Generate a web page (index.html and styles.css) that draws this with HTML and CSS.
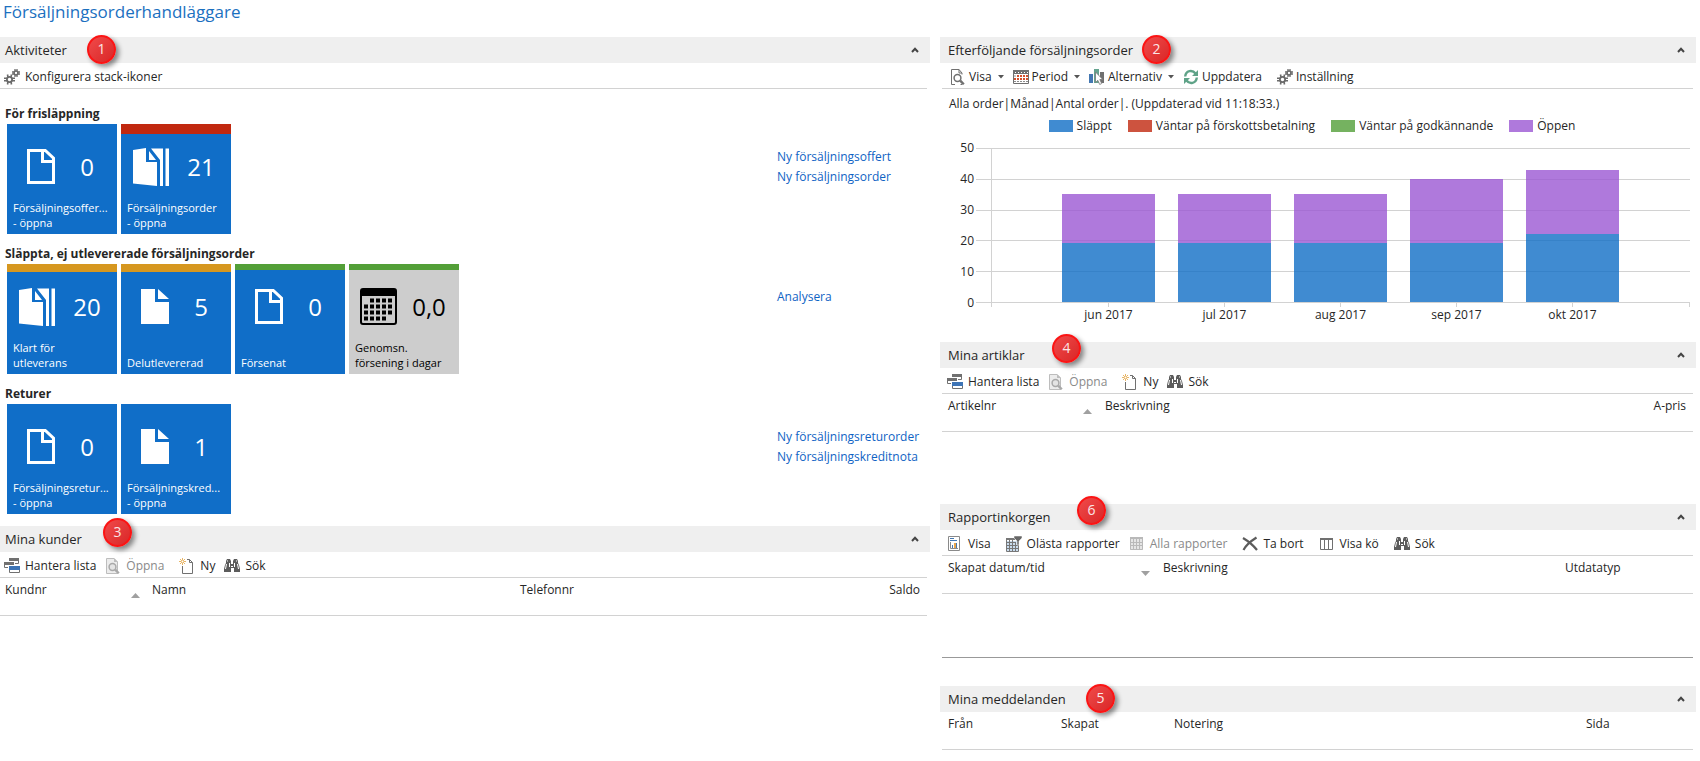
FILE: index.html
```html
<!DOCTYPE html>
<html lang="sv">
<head>
<meta charset="utf-8">
<title>Försäljningsorderhandläggare</title>
<link rel="stylesheet" href="styles.css">
</head>
<body>
<svg class="sprite" aria-hidden="true">
  <symbol id="gears" viewBox="0 0 16 16">
    <g fill="none" stroke="#6b6b6b">
      <circle cx="5.500" cy="10.500" r="2.600" stroke-width="1.800"/>
      <path stroke-width="1.600" d="M4 8.500 3.500 5.500M7 8.500l.5-3M4 12.500l-.5 3M7 12.500l.5 3M3.500 9.200H0M3.500 11.800H0M7.500 9.200H11M7.500 11.800H11"/>
      <circle cx="12" cy="4" r="1.900" stroke-width="1.500"/>
      <path stroke-width="1.300" d="M11 2.500V0M13 2.500V0M11 5.500V8M13 5.500V8M10.500 3H8M10.500 5H8M13.500 3H16M13.500 5H16"/>
    </g>
  </symbol>
  <symbol id="manage" viewBox="0 0 16 16">
    <path fill="#fff" stroke="#707070" d="M5.500.5h9v5h-9z"/><path fill="#707070" d="M5 0h10v3H5z"/>
    <path fill="#fff" d="M0 3h11v7H0z"/><path fill="#fff" stroke="#707070" d="M.5 4.500h9v5h-9z"/><path fill="#707070" d="M0 4h10v3H0z"/>
    <path fill="#fff" d="M4 7h12v9H4z"/><path fill="#fff" stroke="#707070" d="M5.500 8.500h10v6h-10z"/><path fill="#3d74b5" d="M5 8h11v4H5z"/>
  </symbol>
  <symbol id="preview" viewBox="0 0 16 16">
    <path fill="none" stroke="#707070" d="M12 5.500V4L9 .5H1.500v15H5M9 .5V4h3M10.500 15.500h1.500"/>
    <circle cx="7.500" cy="9" r="3.400" fill="#fff" stroke="#707070" stroke-width="1.500"/>
    <path stroke="#707070" stroke-width="2.400" d="m10.200 11.700 3.600 3.600"/>
  </symbol>
  <symbol id="preview-off" viewBox="0 0 16 16">
    <path fill="#ececec" stroke="#bdbdbd" d="M12.500 15.500V4L9 .5H1.500v15z"/><path fill="#bdbdbd" d="M9 0v4h4z"/>
    <circle cx="7.500" cy="9" r="3.400" fill="#e4e4e4" stroke="#a9a9a9" stroke-width="1.500"/>
    <path stroke="#a9a9a9" stroke-width="2.400" d="m10.200 11.700 3.600 3.600"/>
  </symbol>
  <symbol id="new" viewBox="0 0 16 16">
    <path fill="none" stroke="#707070" d="M3.500 8v7.500h10v-11l-3-3H8M10.500 1.500v3h3"/>
    <path stroke="#e8b565" d="M3.500 0v7M0 3.500h7M1 1l5 5M6 1 1 6"/><circle cx="3.500" cy="3.500" r="1" fill="#fff"/>
  </symbol>
  <symbol id="find" viewBox="0 0 16 16">
    <path fill="#5c5c5c" d="M3 1h3l1 2v3h2V3l1-2h3l1 2v2l1 2 1 4v3h-6v-4H7v4H0v-3l1-4 1-2V3z"/>
    <path fill="none" stroke="#fff" d="M3 3h1M12 3h1M2.500 6 1.500 11M13.500 6l1 5M5.500 5v4M10.500 5v4M7 8.500h2"/>
  </symbol>
  <symbol id="period" viewBox="0 0 16 16">
    <path fill="#fff" stroke="#707070" d="M.5 1.500h15v13H.5z"/><path fill="#707070" d="M0 1h16v4H0z"/>
    <path stroke="#fff" stroke-dasharray="1 2" d="M2 3.500h13"/>
    <path stroke="#d4502c" stroke-width="2" stroke-dasharray="2 1" d="M4 7h11M1 10h14"/><path stroke="#8b8b8b" stroke-dasharray="2 1" d="M1 7h2M1 12.500h14"/>
  </symbol>
  <symbol id="option" viewBox="0 0 16 16">
    <path fill="#4478b2" d="M0 5h4v9H0z"/><path fill="#65a48f" d="M5 0h5v14H5z"/><path fill="#707070" d="M11 3h4v11h-4z"/>
    <path fill="#fff" stroke="#777" stroke-width=".8" d="M6.500 3v10.500l2.300-2.200 1.900 4.200 2-1-1.900-4h3z"/>
  </symbol>
  <symbol id="refresh" viewBox="0 0 16 16">
    <g fill="none" stroke="#5fa388" stroke-width="2.400"><path d="M2.200 7.500C2.700 1.300 9.500.5 12.500 4.500M13.800 8.500c-.5 6.200-7.300 7-10.300 3"/></g>
    <path fill="#5fa388" d="M15 1v6H9zM1 15V9h6z"/>
  </symbol>
  <symbol id="report" viewBox="0 0 16 16">
    <path fill="#fff" stroke="#8a8a8a" d="M1.500.5h11v14h-11z"/><path stroke="#4478b2" d="M3 2.500h4M3 4.500h7"/>
    <path fill="none" stroke="#8a8a8a" d="M3.500 6v6.500H11"/><path fill="#4478b2" d="M5 9h1v3H5zM9 7h1v5H9z"/><path fill="#e8a54b" d="M7 7h2v5H7z"/>
  </symbol>
  <symbol id="filter" viewBox="0 0 16 16">
    <path fill="#c9dcee" d="M1 5h11v11H1z"/><path fill="#777" d="M0 2h9v2H0z"/>
    <path fill="none" stroke="#777" d="M.5 3v12.500h12V8M3.500 4v12M6.500 4v12M9.500 6v10M0 6.500h10M0 9.500h12M0 12.500h12"/>
    <path fill="#666" stroke="#fff" stroke-width=".5" d="M8 0h8v2l-3 3v4h-2V5L8 2z"/>
  </symbol>
  <symbol id="grid-off" viewBox="0 0 16 16">
    <path fill="#e5e5e5" d="M1 1h13v13H1z"/><path fill="#b9b9b9" d="M1 1h13v2H1z"/>
    <path fill="none" stroke="#b9b9b9" d="M1.500 2v11.500h12V2M4.500 3v11M7.500 3v11M10.500 3v11M1 6.500h13M1 9.500h13"/>
  </symbol>
  <symbol id="delete" viewBox="0 0 16 16">
    <path fill="none" stroke="#5c5c5c" stroke-width="2.200" d="M1 2c5 3 10 7 14 12M14.500 1.500C9 5 4 9 1.500 14"/>
  </symbol>
  <symbol id="queue" viewBox="0 0 16 16">
    <path fill="#fff" stroke="#707070" d="M1.500 2.500h12v11h-12zM5.500 3v10M9.500 3v10"/><path fill="#707070" d="M1 2h13v2H1z"/>
  </symbol>
  <symbol id="fold" viewBox="0 0 8 6"><path fill="none" stroke="#444" stroke-width="2" d="m1 5 3-3.200L7 5"/></symbol>
  <symbol id="caret" viewBox="0 0 6 4"><path fill="#555" d="M0 0h6L3 3.500z"/></symbol>
  <symbol id="up" viewBox="0 0 9 5"><path fill="#a0a0a0" d="M0 5h9L4.500 0z"/></symbol>
  <symbol id="down" viewBox="0 0 9 5"><path fill="#a0a0a0" d="M0 0h9L4.500 5z"/></symbol>
  <symbol id="doc" viewBox="0 0 28 35"><path fill="none" stroke="#fff" stroke-width="3" d="M1.500 1.500h16.800l8.200 7.700v24.300h-25zM15.500 1.500v11h11"/></symbol>
  <symbol id="doc-full" viewBox="0 0 28 35"><path fill="#fff" d="M0 0h14v13h14v22H0zM17 0l11 10H17z"/></symbol>
  <symbol id="docs" viewBox="0 0 36 38">
    <path fill="#fff" d="M0 2 13 0v14h11v24L0 35.500zM16 3l7 9h-7zM18 .5h12V38h-3V12zM32.500.5H36V38h-3.500z"/>
  </symbol>
  <symbol id="calendar" viewBox="0 0 37 37">
    <rect x="1" y="1" width="35" height="35" rx="2" fill="none" stroke="#000" stroke-width="2"/><path d="M1 1h35v7H1z"/>
    <path stroke="#000" stroke-width="4" stroke-dasharray="4 2" d="M10 12.500h23M4 18.500h29M4 24.500h29M4 30.500h22.500"/>
  </symbol>
</svg>

<h1 class="page-title">Försäljningsorderhandläggare</h1>
<main class="columns">
  <div class="column column-left">
    <section>
      <header class="bar"><h2>Aktiviteter</h2><span class="badge badge-1">1</span><button class="fold" aria-label="Dölj"><svg><use href="#fold"/></svg></button></header>
      <div class="toolbar"><button><svg class="icon"><use href="#gears"/></svg>Konfigurera stack-ikoner</button></div>
      <div class="activities">
        <div class="group">
          <h3>För frisläppning</h3>
          <div class="tiles">
            <button class="tile"><svg class="pic doc"><use href="#doc"/></svg><span class="count">0</span><span class="label">Försäljningsoffer...<br>- öppna</span></button>
            <button class="tile high"><svg class="pic docs"><use href="#docs"/></svg><span class="count">21</span><span class="label">Försäljningsorder<br>- öppna</span></button>
          </div>
          <nav class="links"><a href="#">Ny försäljningsoffert</a><a href="#">Ny försäljningsorder</a></nav>
        </div>
        <div class="group">
          <h3>Släppta, ej utlevererade försäljningsorder</h3>
          <div class="tiles">
            <button class="tile medium"><svg class="pic docs"><use href="#docs"/></svg><span class="count">20</span><span class="label">Klart för<br>utleverans</span></button>
            <button class="tile medium"><svg class="pic doc"><use href="#doc-full"/></svg><span class="count">5</span><span class="label">Delutlevererad</span></button>
            <button class="tile low"><svg class="pic doc"><use href="#doc"/></svg><span class="count">0</span><span class="label">Försenat</span></button>
            <button class="tile low neutral"><svg class="pic calendar"><use href="#calendar"/></svg><span class="count">0,0</span><span class="label">Genomsn.<br>försening i dagar</span></button>
          </div>
          <nav class="links"><a href="#">Analysera</a></nav>
        </div>
        <div class="group">
          <h3>Returer</h3>
          <div class="tiles">
            <button class="tile"><svg class="pic doc"><use href="#doc"/></svg><span class="count">0</span><span class="label">Försäljningsretur...<br>- öppna</span></button>
            <button class="tile"><svg class="pic doc"><use href="#doc-full"/></svg><span class="count">1</span><span class="label">Försäljningskred...<br>- öppna</span></button>
          </div>
          <nav class="links"><a href="#">Ny försäljningsreturorder</a><a href="#">Ny försäljningskreditnota</a></nav>
        </div>
      </div>
    </section>
    <section>
      <header class="bar"><h2>Mina kunder</h2><span class="badge badge-3">3</span><button class="fold" aria-label="Dölj"><svg><use href="#fold"/></svg></button></header>
      <div class="toolbar">
        <button><svg class="icon"><use href="#manage"/></svg>Hantera lista</button>
        <button disabled><svg class="icon"><use href="#preview-off"/></svg>Öppna</button>
        <button class="apart"><svg class="icon"><use href="#new"/></svg>Ny</button>
        <button><svg class="icon"><use href="#find"/></svg>Sök</button>
      </div>
      <table class="list">
        <colgroup><col class="w147"><col><col class="w299"><col class="w113"></colgroup>
        <thead><tr><th><span class="sorted">Kundnr<svg><use href="#up"/></svg></span></th><th>Namn</th><th>Telefonnr</th><th class="num">Saldo</th></tr></thead>
      </table>
    </section>
  </div>

  <div class="column column-right">
    <section class="chart-part">
      <header class="bar"><h2>Efterföljande försäljningsorder</h2><span class="badge badge-2">2</span><button class="fold" aria-label="Dölj"><svg><use href="#fold"/></svg></button></header>
      <div class="toolbar chart-tools">
        <button><svg class="icon"><use href="#preview"/></svg>Visa<svg class="caret"><use href="#caret"/></svg></button>
        <button><svg class="icon"><use href="#period"/></svg>Period<svg class="caret"><use href="#caret"/></svg></button>
        <button><svg class="icon"><use href="#option"/></svg>Alternativ<svg class="caret"><use href="#caret"/></svg></button>
        <button><svg class="icon"><use href="#refresh"/></svg>Uppdatera</button>
        <button class="apart"><svg class="icon"><use href="#gears"/></svg>Inställning</button>
      </div>
      <p class="status">Alla order|Månad|Antal order|. (Uppdaterad vid 11:18:33.)</p>
      <ul class="legend"><li class="released">Släppt</li><li class="prepay">Väntar på förskottsbetalning</li><li class="approval">Väntar på godkännande</li><li class="open">Öppen</li></ul>
      <div class="chart">
        <div class="scale"><span>50</span><span>40</span><span>30</span><span>20</span><span>10</span><span>0</span></div>
        <div class="plot">
          <div class="lines"><i></i><i></i><i></i><i></i><i></i><i></i></div>
          <div class="bars">
            <div class="stack"><i class="open" style="height:32%"></i><i class="released" style="height:38%"></i></div>
            <div class="stack"><i class="open" style="height:32%"></i><i class="released" style="height:38%"></i></div>
            <div class="stack"><i class="open" style="height:32%"></i><i class="released" style="height:38%"></i></div>
            <div class="stack"><i class="open" style="height:42%"></i><i class="released" style="height:38%"></i></div>
            <div class="stack"><i class="open" style="height:42%"></i><i class="released" style="height:44%"></i></div>
          </div>
          <div class="months"><span>jun 2017</span><span>jul 2017</span><span>aug 2017</span><span>sep 2017</span><span>okt 2017</span></div>
        </div>
      </div>
    </section>
    <section class="items-part">
      <header class="bar"><h2>Mina artiklar</h2><span class="badge badge-4">4</span><button class="fold" aria-label="Dölj"><svg><use href="#fold"/></svg></button></header>
      <div class="toolbar">
        <button><svg class="icon"><use href="#manage"/></svg>Hantera lista</button>
        <button disabled><svg class="icon"><use href="#preview-off"/></svg>Öppna</button>
        <button class="apart"><svg class="icon"><use href="#new"/></svg>Ny</button>
        <button><svg class="icon"><use href="#find"/></svg>Sök</button>
      </div>
      <table class="list">
        <colgroup><col class="w157"><col><col class="w147"></colgroup>
        <thead><tr><th><span class="sorted">Artikelnr<svg><use href="#up"/></svg></span></th><th>Beskrivning</th><th class="num">A-pris</th></tr></thead>
      </table>
    </section>
    <section class="reports-part">
      <header class="bar"><h2>Rapportinkorgen</h2><span class="badge badge-6">6</span><button class="fold" aria-label="Dölj"><svg><use href="#fold"/></svg></button></header>
      <div class="toolbar">
        <button><svg class="icon"><use href="#report"/></svg>Visa</button>
        <button class="apart"><svg class="icon"><use href="#filter"/></svg>Olästa rapporter</button>
        <button disabled><svg class="icon"><use href="#grid-off"/></svg>Alla rapporter</button>
        <button class="apart"><svg class="icon"><use href="#delete"/></svg>Ta bort</button>
        <button class="apart"><svg class="icon"><use href="#queue"/></svg>Visa kö</button>
        <button class="apart"><svg class="icon"><use href="#find"/></svg>Sök</button>
      </div>
      <table class="list">
        <colgroup><col class="w215"><col><col class="w134"></colgroup>
        <thead><tr><th><span class="sorted">Skapat datum/tid<svg><use href="#down"/></svg></span></th><th>Beskrivning</th><th>Utdatatyp</th></tr></thead>
      </table>
    </section>
    <section>
      <header class="bar"><h2>Mina meddelanden</h2><span class="badge badge-5">5</span><button class="fold" aria-label="Dölj"><svg><use href="#fold"/></svg></button></header>
      <table class="list">
        <colgroup><col class="w113"><col class="w113"><col><col class="w113"></colgroup>
        <thead><tr><th>Från</th><th>Skapat</th><th>Notering</th><th>Sida</th></tr></thead>
      </table>
    </section>
  </div>
</main>
</body>
</html>
```

FILE: styles.css
```css
* { box-sizing: border-box; }
body { margin: 0; background: #fff; color: #262626; font: 12px/16px "Open Sans", "Noto Sans", sans-serif; }
h1, h2, h3, p, ul { margin: 0; padding: 0; font-weight: 400; }
button { border: 0; padding: 0; background: none; color: inherit; font: inherit; text-align: left; }
svg { display: block; flex: none; }
.sprite { position: absolute; width: 0; height: 0; }

.page-title { padding: 0 3px; height: 37px; color: #1b70bf; font-size: 17px; line-height: 24px; }
.columns { display: flex; gap: 10px; padding-right: 4px; }
.column-left { flex: 930; min-width: 0; }
.column-right { flex: 756; min-width: 0; }

.bar { position: relative; display: flex; align-items: center; justify-content: space-between; height: 26px; padding: 0 11px 0 5px; background: #efefef; }
.column-right .bar { padding-left: 8px; }
.bar h2 { font-size: 13px; line-height: 20px; }
.fold svg { width: 8px; height: 6px; }
.badge { position: absolute; top: -2px; width: 29px; height: 29px; border: 2px solid #fb1414; border-radius: 50%; background: linear-gradient(135deg, #f04a4a, #d92727); box-shadow: 3px 3px 5px rgba(0, 0, 0, .45); color: #fbe6e6; font-size: 14px; line-height: 24px; text-align: center; }
.badge-1 { left: 87px; }
.badge-2 { left: 202px; }
.badge-3 { left: 103px; top: -8px; }
.badge-4 { left: 112px; top: -8px; }
.badge-5 { left: 146px; }
.badge-6 { left: 137px; top: -8px; }

.toolbar { display: flex; align-items: center; gap: 9px; height: 26px; margin-right: 3px; padding: 2px 0 0 4px; border-bottom: 1px solid #d2d2d2; }
.column-right .toolbar { margin-left: 2px; padding-left: 5px; }
.toolbar button { display: flex; align-items: center; gap: 5px; white-space: nowrap; }
.toolbar button:disabled { color: #8a8a8a; }
.toolbar .apart { margin-left: 6px; }
.icon { width: 16px; height: 16px; }
.caret { width: 6px; height: 4px; margin-left: 3px; }
.column-right .chart-tools { padding-left: 8px; }
.chart-tools button { gap: 3px; }

.activities { padding: 5px 0 12px; }
.group { display: grid; grid-template-columns: 1fr 153px; }
.group h3 { grid-column: 1 / -1; padding: 12px 5px 2px; font-size: 12px; line-height: 16px; font-weight: 700; }
.tiles { display: flex; gap: 4px; padding-left: 7px; }
.tile { position: relative; display: grid; grid-template: 85px 1fr / 48px 1fr; flex: none; width: 110px; height: 110px; background: #106ec8; color: #fff; }
.high::before, .medium::before, .low::before { content: ""; position: absolute; inset: 0 0 auto; }
.high::before { height: 10px; background: #c1280f; }
.medium::before { height: 8px; background: #d6971f; }
.low::before { height: 6px; background: #539f38; }
.neutral { background: #cdcdcd; color: #000; }
.pic { place-self: center end; }
.doc { width: 28px; height: 35px; }
.docs { width: 36px; height: 38px; }
.calendar { width: 37px; height: 37px; }
.count { place-self: center; padding-left: 2px; font-size: 24px; line-height: 32px; }
.label { position: absolute; left: 6px; bottom: 4px; font-size: 11px; line-height: 15px; white-space: nowrap; }
.links { display: flex; flex-direction: column; padding-top: 23px; line-height: 20px; }
a { color: #0f63c4; text-decoration: none; }

.list { width: calc(100% - 3px); border-spacing: 0; table-layout: fixed; border-bottom: 1px solid #d2d2d2; }
.column-right .list { width: calc(100% - 5px); margin-left: 2px; }
.list th { height: 37px; padding: 4px 7px 0 5px; font-weight: 400; text-align: left; vertical-align: top; white-space: nowrap; }
.column-right .list th { padding-left: 6px; }
.list .num { text-align: right; }
.sorted { display: flex; justify-content: space-between; }
.sorted svg { width: 9px; height: 5px; margin: 11px 0 0; }
.w113 { width: 113px; }
.w134 { width: 134px; }
.w147 { width: 147px; }
.w157 { width: 157px; }
.w215 { width: 215px; }
.w299 { width: 299px; }

.status { padding: 7px 9px 0; }
.legend { display: flex; justify-content: center; gap: 16px; padding: 6px 12px 0 0; list-style: none; }
.legend li { display: flex; align-items: center; gap: 4px; }
.legend li::before { content: ""; width: 24px; height: 12px; background: var(--series); opacity: .8; }
.released { --series: #106ec5; }
.prepay { --series: #c1280f; }
.approval { --series: #539f38; }
.open { --series: #9b57d3; }

.chart { display: flex; gap: 2px; padding: 14px 6px 19px 0; }
.scale { display: flex; flex-direction: column; justify-content: space-between; width: 34px; height: 171px; margin: -8px 0; text-align: right; }
.plot { position: relative; flex: 1; }
.lines { display: flex; flex-direction: column; justify-content: space-between; height: 155px; }
.lines i { height: 1px; background: #d2d2d2; }
.bars { position: absolute; top: 0; right: 0; left: 15px; height: 155px; display: flex; padding: 0 8.333%; }
.bars::before, .bars::after { content: ""; position: absolute; left: 0; top: 0; width: 1px; height: 159px; background: #d2d2d2; }
.bars::after { left: auto; right: 0; top: 155px; height: 4px; }
.stack { position: relative; flex: 1; display: flex; flex-direction: column; align-items: center; justify-content: flex-end; padding-bottom: 1px; }
.stack i { width: 80%; background: var(--series); opacity: .8; }
.stack::after { content: ""; position: absolute; top: 155px; left: 50%; width: 1px; height: 4px; background: #d2d2d2; }
.months { display: flex; margin-left: 15px; padding: 4px 8.333% 0; }
.months span { flex: 1; text-align: center; }

.items-part { padding-bottom: 72px; }
.reports-part { padding-bottom: 28px; }
.reports-part::after { content: ""; display: block; margin: 63px 3px 0 2px; border-bottom: 1px solid #999; }
```
